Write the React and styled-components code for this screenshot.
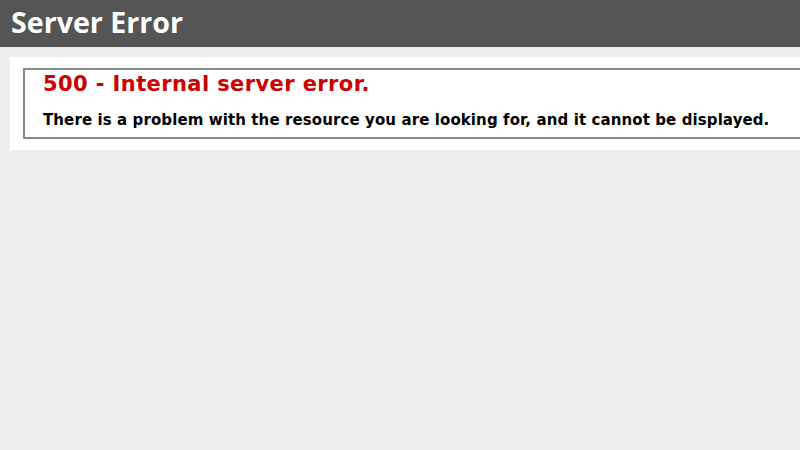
import React from 'react'
import styled, {createGlobalStyle} from 'styled-components'

const GlobalStyle = createGlobalStyle`
    html, body{
        margin: 0;
        padding: 0;
        background: #eeeeee;
        overflow: hidden;
    }
    body{
        font-family: "DejaVu Sans", Verdana, sans-serif;
        width: 800px;
        height: 450px;
    }
`

export default function App() {
    return (
        <>
            <GlobalStyle />
            <Header>
                <h1>Server Error</h1>
            </Header>
            <Content>
                <Container>
                    <Fieldset>
                        <h2>500 - Internal server error.</h2>
                        <h3>There is a problem with the resource you are looking for, and it cannot be displayed.</h3>
                    </Fieldset>
                </Container>
            </Content>
        </>
    )
}

const Header = styled.div`
    height: 47px;
    box-sizing: border-box;
    padding: 0 11px;
    display: flex;
    align-items: center;
    background-color: #555555;
    h1{
        margin: 0;
        font-family: "Open Sans", "DejaVu Sans", sans-serif;
        font-size: 28.6px;
        font-weight: 700;
        color: #fff;
        line-height: 1;
        margin-top: -3px;
    }
`

const Content = styled.div`
    padding: 10px 0 0 10px;
`

const Container = styled.div`
    background: #fff;
    width: 820px;
    padding: 11px 13px 11px 13px;
    box-sizing: border-box;
`

const Fieldset = styled.div`
    border: 2px solid #8a8a8a;
    border-right: none;
    padding: 2px 0 8px 18px;
    h2{
        margin: 0;
        font-size: 21px;
        letter-spacing: 0.4px;
        font-weight: 700;
        color: #cc0000;
        line-height: 24px;
    }
    h3{
        margin: 15px 0 0 0;
        font-size: 15px;
        letter-spacing: 0.1px;
        font-weight: 700;
        color: #000;
        line-height: 18px;
    }
`
